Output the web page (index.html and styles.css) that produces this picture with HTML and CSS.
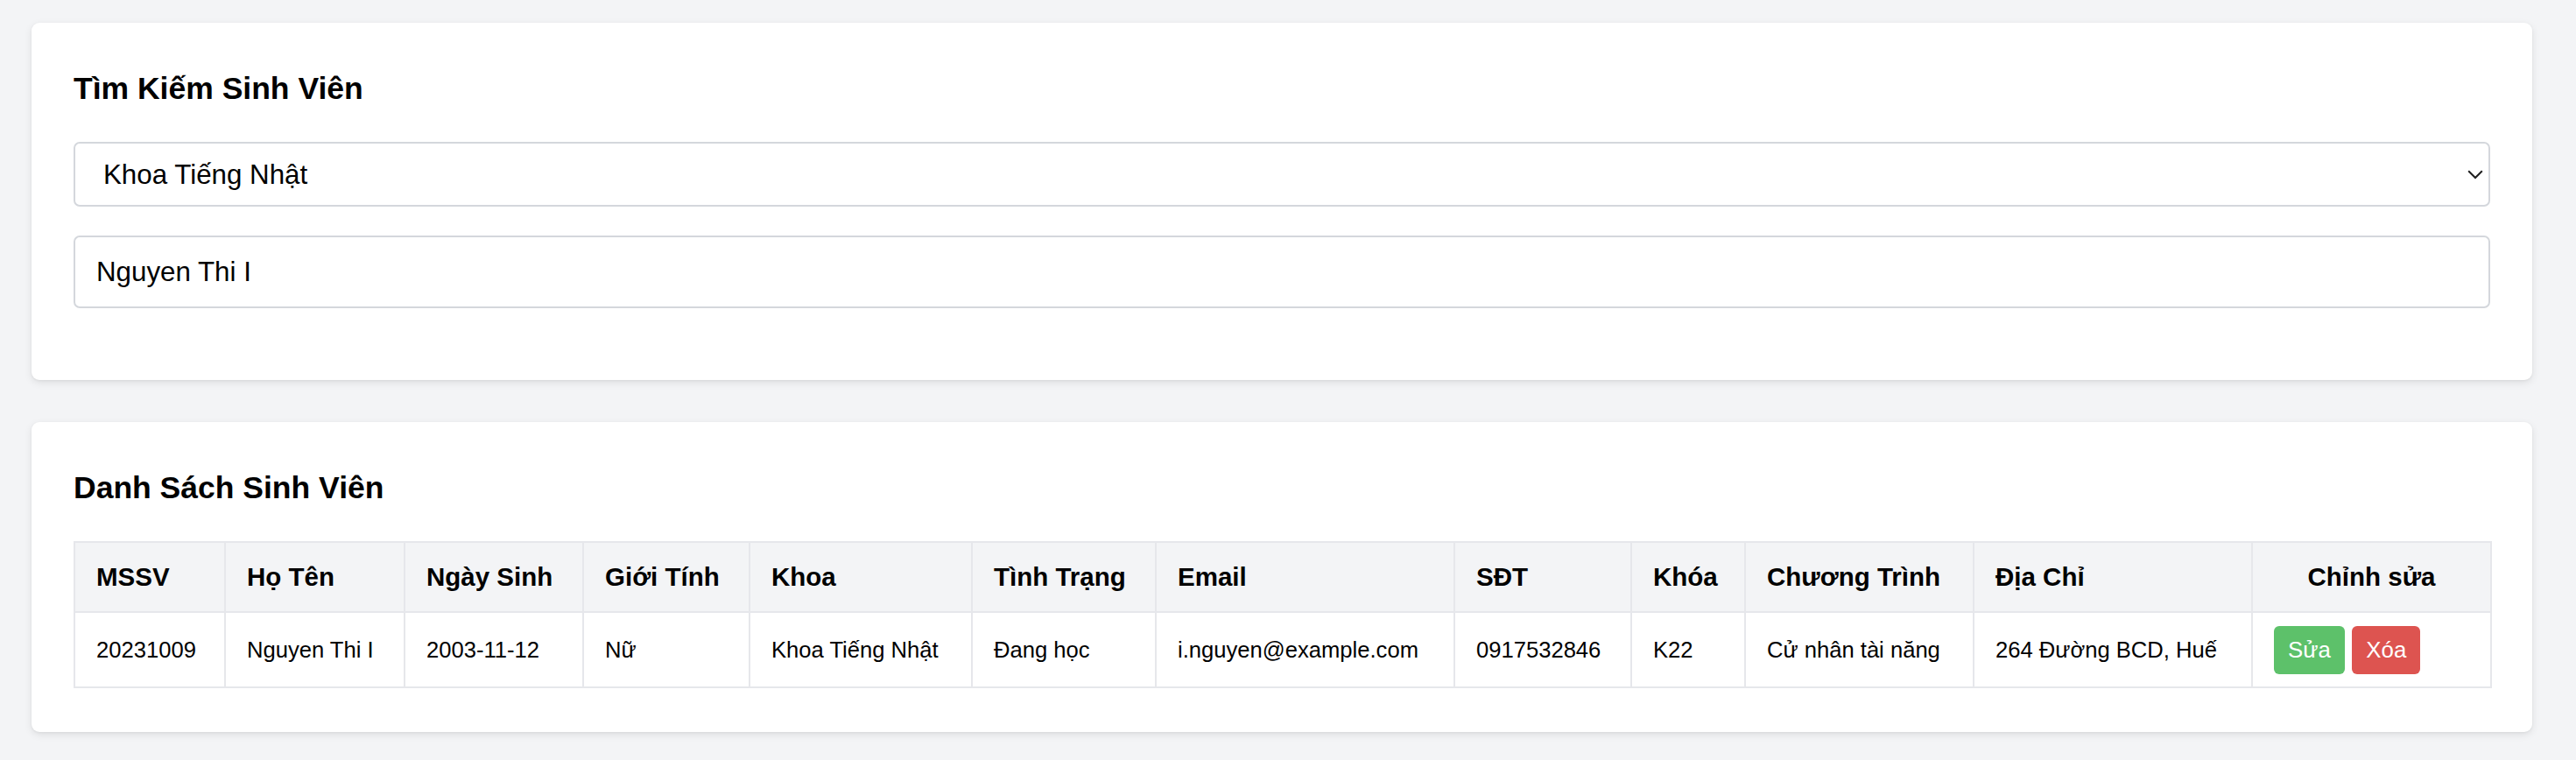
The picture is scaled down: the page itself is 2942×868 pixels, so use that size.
FILE: index.html
```html
<!DOCTYPE html>
<html lang="vi">
<head>
<meta charset="utf-8">
<title>Quản lý sinh viên</title>
<link rel="stylesheet" href="styles.css">
</head>
<body>
<main class="page">
  <section class="card">
    <h2 class="card-title">Tìm Kiếm Sinh Viên</h2>
    <div class="search-form">
      <div class="select-wrap">
        <select class="field field-select">
          <option>Khoa Tiếng Nhật</option>
          <option>Khoa Luật</option>
          <option>Khoa Tiếng Anh Thương mại</option>
          <option>Khoa Tiếng Pháp</option>
        </select>
        <svg class="chevron" width="18" height="11" viewBox="0 0 18 11" aria-hidden="true">
          <path d="M1.2 1.3 L9 9 L16.8 1.3" fill="none" stroke="#1f1f1f" stroke-width="2"/>
        </svg>
      </div>
      <input class="field field-input" type="text" value="Nguyen Thi I">
    </div>
  </section>

  <section class="card">
    <h2 class="card-title">Danh Sách Sinh Viên</h2>
    <table class="students">
      <colgroup>
        <col class="c-mssv">
        <col class="c-name">
        <col class="c-dob">
        <col class="c-gender">
        <col class="c-faculty">
        <col class="c-status">
        <col class="c-email">
        <col class="c-phone">
        <col class="c-course">
        <col class="c-program">
        <col class="c-address">
        <col class="c-actions">
      </colgroup>
      <thead>
        <tr>
          <th>MSSV</th>
          <th>Họ Tên</th>
          <th>Ngày Sinh</th>
          <th>Giới Tính</th>
          <th>Khoa</th>
          <th>Tình Trạng</th>
          <th>Email</th>
          <th>SĐT</th>
          <th>Khóa</th>
          <th>Chương Trình</th>
          <th>Địa Chỉ</th>
          <th class="th-center">Chỉnh sửa</th>
        </tr>
      </thead>
      <tbody>
        <tr>
          <td>20231009</td>
          <td>Nguyen Thi I</td>
          <td>2003-11-12</td>
          <td>Nữ</td>
          <td>Khoa Tiếng Nhật</td>
          <td>Đang học</td>
          <td>i.nguyen@example.com</td>
          <td>0917532846</td>
          <td>K22</td>
          <td>Cử nhân tài năng</td>
          <td>264 Đường BCD, Huế</td>
          <td>
            <div class="actions">
              <button class="btn btn-edit" type="button">Sửa</button>
              <button class="btn btn-delete" type="button">Xóa</button>
            </div>
          </td>
        </tr>
      </tbody>
    </table>
  </section>
</main>
</body>
</html>
```

FILE: styles.css
```css
* {
  box-sizing: border-box;
}

html, body {
  margin: 0;
  background: #f3f4f6;
}

body {
  font-family: "Liberation Sans", Arial, Helvetica, sans-serif;
  color: #111;
}

.page {
  padding: 26px 50px 26px 36px;
  display: flex;
  flex-direction: column;
  gap: 48px;
}

.card {
  background: #fff;
  border-radius: 9px;
  box-shadow: 0 3px 10px rgba(0, 0, 0, 0.09), 0 1px 3px rgba(0, 0, 0, 0.05);
  padding: 55px 48px 50px;
}

.card-title {
  margin: 0 0 41px;
  font-size: 35.5px;
  line-height: 40px;
  font-weight: bold;
  color: #000;
}

.search-form {
  display: flex;
  flex-direction: column;
  gap: 33px;
  padding-bottom: 32px;
}

.select-wrap {
  position: relative;
}

.field {
  display: block;
  width: 100%;
  margin: 0;
  border: 2px solid #d4d7dc;
  border-radius: 7px;
  background: #fff;
  color: #000;
  font-family: "Liberation Sans", Arial, Helvetica, sans-serif;
  font-size: 31.3px;
  outline: none;
}

.field-select {
  height: 74px;
  padding: 0 60px 0 32px;
  appearance: none;
  -webkit-appearance: none;
}

.chevron {
  position: absolute;
  right: 8px;
  top: 32px;
  pointer-events: none;
}

.field-input {
  height: 83px;
  padding: 0 24px;
}

.students {
  width: 100%;
  table-layout: fixed;
  border-collapse: collapse;
  font-size: 25.6px;
}

.c-mssv { width: 172px; }
.c-name { width: 205px; }
.c-dob { width: 204px; }
.c-gender { width: 190px; }
.c-faculty { width: 254px; }
.c-status { width: 210px; }
.c-email { width: 341px; }
.c-phone { width: 202px; }
.c-course { width: 130px; }
.c-program { width: 261px; }
.c-address { width: 318px; }
.c-actions { width: 273px; }

.students th,
.students td {
  border: 2px solid #e6e7eb;
  text-align: left;
  vertical-align: middle;
  white-space: nowrap;
}

.students th {
  background: #f3f4f6;
  font-size: 29.5px;
  font-weight: bold;
  color: #000;
  padding: 0 24px;
  height: 80px;
}

.students th.th-center {
  text-align: center;
}

.students td {
  padding: 0 24px;
  height: 86px;
  color: #000;
}

.actions {
  display: flex;
  gap: 8.5px;
}

.btn {
  height: 55px;
  padding: 0 16px;
  border: none;
  border-radius: 6px;
  color: #fff;
  font-family: "Liberation Sans", Arial, Helvetica, sans-serif;
  font-size: 25.8px;
  cursor: pointer;
}

.btn-edit {
  background: #5dc16a;
}

.btn-delete {
  background: #dd5450;
}
```
